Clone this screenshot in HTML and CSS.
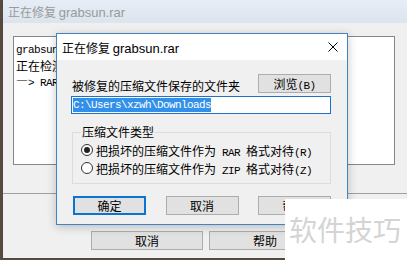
FILE: index.html
```html
<!DOCTYPE html>
<html lang="zh-CN">
<head>
<meta charset="utf-8">
<title>正在修复 grabsun.rar</title>
<link rel="stylesheet" href="styles.css">
</head>
<body>
<div class="desk">
  <div class="win">
    <div class="win-title">正在修复 <span class="t-lat">grabsun.rar</span></div>
    <div class="win-body">
      <div class="log sim">
        <div><span class="lat">grabsun</span></div>
        <div>正在检测</div>
        <div>—<span class="lat">&gt; RAR</span></div>
      </div>
      <div class="win-sep"></div>
      <div class="win-btns">
        <button class="btn wide">取消</button>
        <button class="btn wide">帮助</button>
      </div>
    </div>
  </div>
</div>

<div class="dlg">
  <div class="dlg-title">
    <span>正在修复 <span class="t-lat">grabsun.rar</span></span>
    <svg class="close" width="10" height="10" viewBox="0 0 10 10"><path d="M0.5 0.5L9.5 9.5M9.5 0.5L0.5 9.5" stroke="#000" stroke-width="1"/></svg>
  </div>
  <div class="dlg-body sim">
    <div class="row1">
      <span class="lbl">被修复的压缩文件保存的文件夹</span>
      <button class="btn browse">浏览<span class="lat">(B)</span></button>
    </div>
    <div class="path"><span class="sel lat">C:\Users\xzwh\Downloads</span></div>
    <fieldset class="grp">
      <legend>压缩文件类型</legend>
      <div class="radio"><span class="rb on"></span><span class="rtxt">把损坏的压缩文件作为<span class="lat"> RAR </span>格式对待<span class="lat">(R)</span></span></div>
      <div class="radio"><span class="rb"></span><span class="rtxt">把损坏的压缩文件作为<span class="lat"> ZIP </span>格式对待<span class="lat">(Z)</span></span></div>
    </fieldset>
    <div class="btns">
      <button class="btn def">确定</button>
      <button class="btn">取消</button>
      <button class="btn">帮助</button>
    </div>
  </div>
</div>

<div class="watermark">软件技巧</div>
</body>
</html>
```

FILE: styles.css
```css
html, body {
  margin: 0;
  padding: 0;
}
body {
  width: 407px;
  height: 260px;
  overflow: hidden;
  position: relative;
  background: #5a4a3a;
  font-family: "Noto Sans CJK SC", sans-serif;
  font-size: 12px;
}
.desk {
  padding-left: 2px;
  height: 260px;
  box-sizing: border-box;
}
.win {
  height: 259px;
  box-sizing: border-box;
  border-left: 1px solid #4a4a4a;
  border-bottom: 1px solid #4a4a4a;
  background: #f0f0f0;
}
.win-title {
  height: 23px;
  box-sizing: border-box;
  padding-left: 5px;
  line-height: 23px;
  color: #9a9a9a;
  background: linear-gradient(#e6edf6, #dce4ee);
  font-family: "Noto Sans CJK SC", sans-serif;
  font-size: 12px;
}
.t-lat {
  font-family: "Liberation Sans", sans-serif;
  font-size: 13px;
}
.win-body {
  padding: 13px 12px 0 10px;
}
.sim {
  font-family: "Noto Sans CJK SC", sans-serif;
  font-size: 12px;
  color: #000;
}
.lat {
  font-family: "Liberation Mono", monospace;
  font-size: 11px;
  letter-spacing: -0.6px;
}
.log {
  height: 129px;
  box-sizing: border-box;
  background: #fff;
  border: 1px solid #828790;
  padding: 3px 0 0 2px;
  line-height: 15px;
  overflow: hidden;
  white-space: nowrap;
}
.win-sep {
  margin: 28px -12px 0 -10px;
  height: 1px;
  background: #a0a0a0;
}
.win-btns {
  display: flex;
  gap: 6px;
  margin: 37px 0 0 78px;
}
.btn {
  font: inherit;
  color: #000;
  background: #e1e1e1;
  border: 1px solid #adadad;
  margin: 0;
  padding: 0;
  height: 19px;
  line-height: 17px;
  box-sizing: border-box;
}
.btn.wide {
  width: 112px;
}

.dlg {
  position: absolute;
  left: 56px;
  top: 33px;
  width: 292px;
  box-sizing: border-box;
  border: 1px solid #3f84c4;
  background: #f0f0f0;
  box-shadow: 0 2px 9px rgba(0, 0, 0, 0.22);
}
.dlg-title {
  height: 26px;
  background: #fff;
  display: flex;
  align-items: center;
  justify-content: space-between;
  padding: 0 9px 0 5px;
  font-family: "Noto Sans CJK SC", sans-serif;
  font-size: 12px;
  color: #000;
}
.close {
  display: block;
}
.dlg-body {
  padding: 14px 16px 9px 14px;
}
.row1 {
  display: flex;
  justify-content: space-between;
  align-items: flex-end;
}
.lbl {
  padding-left: 1px;
  line-height: 14px;
}
.browse {
  width: 73px;
}
.path {
  margin-top: 3px;
  height: 18px;
  box-sizing: border-box;
  border: 1px solid #1c73c8;
  background: #fff;
  padding: 1px;
  display: flex;
}
.sel {
  background: #3390e8;
  color: #fff;
  line-height: 14px;
  height: 14px;
}
.grp {
  margin: 11px 0 0 1px;
  padding: 2px 0 6px 8px;
  border: 1px solid #dcdcdc;
  min-width: 0;
}
.grp legend {
  padding: 0 1px;
  line-height: 14px;
}
.radio {
  display: flex;
  align-items: center;
  height: 18px;
  white-space: nowrap;
}
.rtxt {
  white-space: pre;
}
.rb {
  width: 12px;
  height: 12px;
  box-sizing: border-box;
  border: 1px solid #333;
  border-radius: 50%;
  background: #fff;
  margin-right: 3px;
  display: flex;
  align-items: center;
  justify-content: center;
  flex: none;
}
.rb.on::after {
  content: "";
  width: 6px;
  height: 6px;
  border-radius: 50%;
  background: #222;
}
.btns {
  display: flex;
  justify-content: space-between;
  margin-top: 12px;
  padding-left: 2px;
}
.btns .btn {
  width: 73px;
}
.btn.def {
  border: 2px solid #0a74d0;
  line-height: 15px;
}

.watermark {
  position: absolute;
  left: 285px;
  top: 199px;
  width: 122px;
  height: 61px;
  background: #fff;
  color: #d4d4d4;
  font-family: "Noto Sans CJK SC", sans-serif;
  font-size: 28px;
  line-height: 61px;
  padding-left: 4px;
  box-sizing: border-box;
  white-space: nowrap;
}
```
